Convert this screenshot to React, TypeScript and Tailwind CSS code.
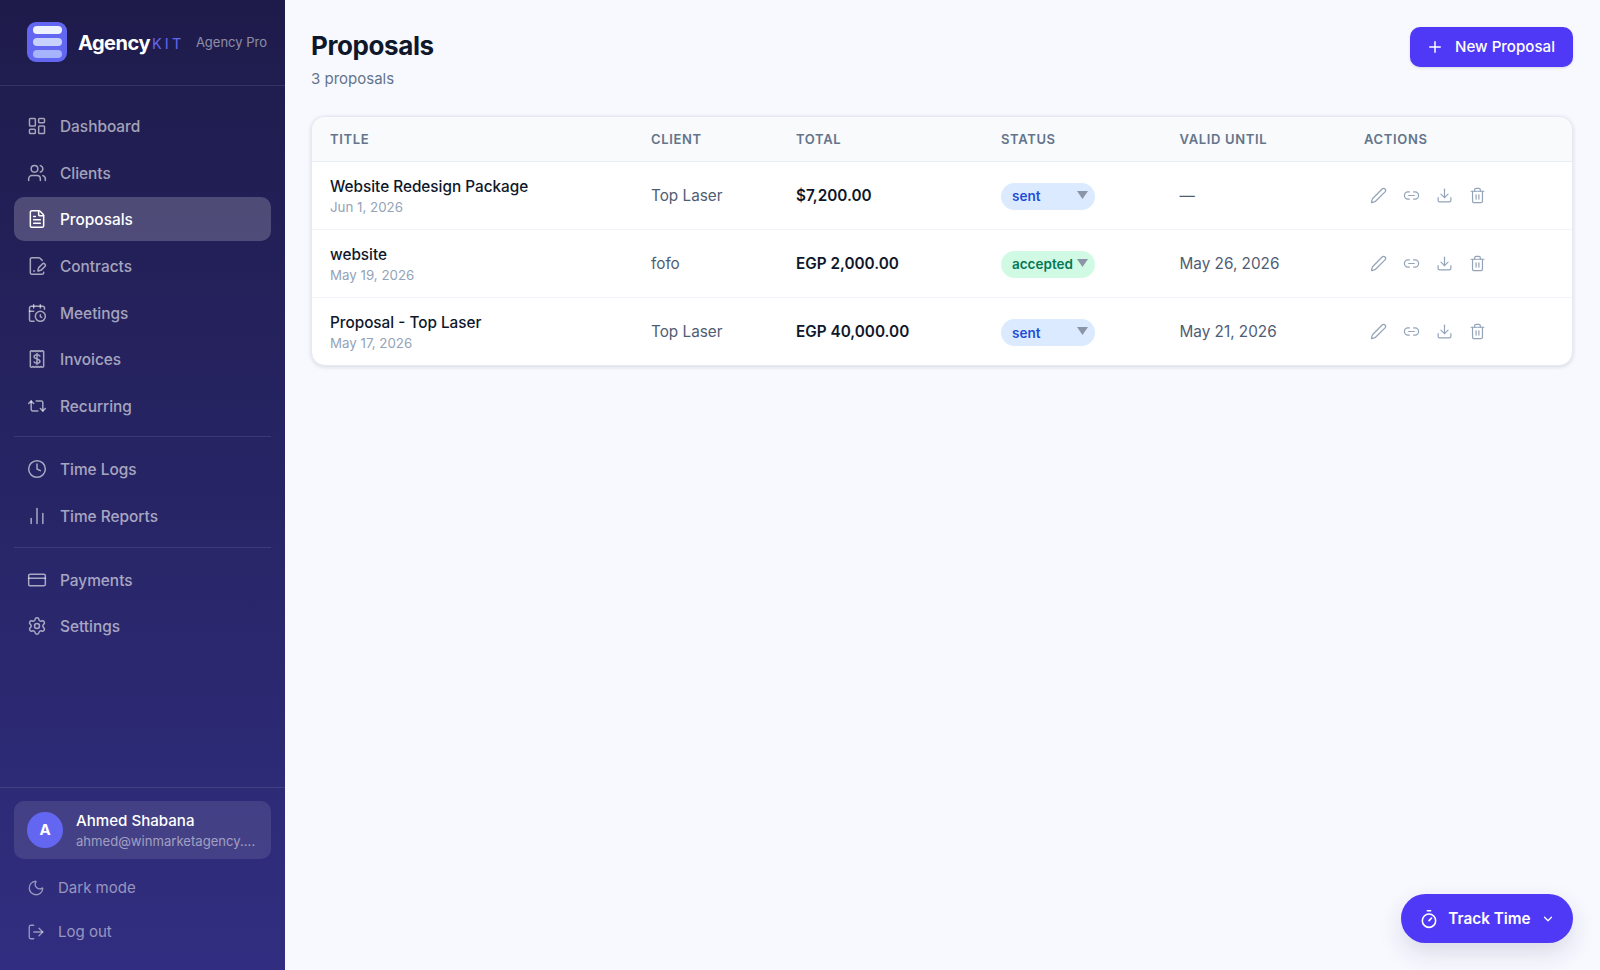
import {
  ChartNoAxesColumn,
  ChevronDown,
  Clock,
  CreditCard,
  Download,
  FileText,
  Link2,
  LayoutDashboard,
  LogOut,
  Moon,
  Pen,
  Plus,
  Repeat2,
  Settings,
  Timer,
  Trash2,
  Users,
  CalendarClock,
  FilePenLine,
} from "lucide-react";

function InvoiceIcon() {
  return (
    <svg width="20" height="20" viewBox="0 0 24 24" fill="none" stroke="currentColor" strokeWidth="1.8" strokeLinecap="round" strokeLinejoin="round">
      <path d="M4 3l1.6-1 1.6 1 1.6-1 1.6 1 1.6-1 1.6 1 1.6-1 1.6 1 1.6-1 1.6 1v18l-1.6 1-1.6-1-1.6 1-1.6-1-1.6 1-1.6-1-1.6 1-1.6-1-1.6 1-1.6-1z" />
      <path d="M15.5 8.5c-.5-1-1.8-1.5-3.5-1.5-2 0-3.5.9-3.5 2.4 0 3.4 7 1.8 7 5.2 0 1.500-1.500 2.400-3.500 2.400-1.700 0-3-.5-3.500-1.500M12 5.500v13" />
    </svg>
  );
}

const groups = [
  [
    { label: "Dashboard", icon: <LayoutDashboard size={20} strokeWidth={1.8} /> },
    { label: "Clients", icon: <Users size={20} strokeWidth={1.8} /> },
    { label: "Proposals", icon: <FileText size={20} strokeWidth={1.8} />, active: true },
    { label: "Contracts", icon: <FilePenLine size={20} strokeWidth={1.8} /> },
    { label: "Meetings", icon: <CalendarClock size={20} strokeWidth={1.8} /> },
    { label: "Invoices", icon: <InvoiceIcon /> },
    { label: "Recurring", icon: <Repeat2 size={20} strokeWidth={1.8} /> },
  ],
  [
    { label: "Time Logs", icon: <Clock size={20} strokeWidth={1.8} /> },
    { label: "Time Reports", icon: <ChartNoAxesColumn size={20} strokeWidth={1.8} /> },
  ],
  [
    { label: "Payments", icon: <CreditCard size={20} strokeWidth={1.8} /> },
    { label: "Settings", icon: <Settings size={20} strokeWidth={1.8} /> },
  ],
];

const proposals = [
  { title: "Website Redesign Package", date: "Jun 1, 2026", client: "Top Laser", total: "$7,200.00", status: "sent", valid: "—" },
  { title: "website", date: "May 19, 2026", client: "fofo", total: "EGP 2,000.00", status: "accepted", valid: "May 26, 2026" },
  { title: "Proposal - Top Laser", date: "May 17, 2026", client: "Top Laser", total: "EGP 40,000.00", status: "sent", valid: "May 21, 2026" },
];

function StatusPill({ status }: { status: string }) {
  const accepted = status === "accepted";
  return (
    <div
      className={
        accepted
          ? "flex h-[27px] w-[94px] items-center justify-between rounded-full bg-[#d1fae5] pl-[11px] pr-[7px] text-[13.500px] font-semibold text-[#047857]"
          : "flex h-[27px] w-[94px] items-center justify-between rounded-full bg-[#dbeafe] pl-[11px] pr-[7px] text-[13.500px] font-semibold text-[#1d4ed8]"
      }
    >
      <span className="pt-px">{status}</span>
      <svg width="11" height="8" viewBox="0 0 11 8" className="-mt-[2px]">
        <path d="M0 0h11L5.500 8z" fill="#8b95a7" />
      </svg>
    </div>
  );
}

export default function App() {
  return (
    <div className="flex h-screen overflow-hidden bg-[#f8f9ff] font-['Inter',sans-serif] text-[#0f172a]">
      <aside className="flex w-[285px] shrink-0 flex-col bg-gradient-to-b from-[#1e1b4b] to-[#312e81]">
        <div className="flex h-[86px] shrink-0 items-center border-b border-white/10 pl-[27px] pr-[18px]">
          <div className="mb-[1px] flex h-10 w-10 flex-col justify-center gap-1 rounded-[9px] bg-[#6366f1] px-[5.500px]">
            <div className="h-2 rounded-full bg-[#eef2ff]" />
            <div className="h-2 rounded-full bg-[#c7d2fe]" />
            <div className="h-2 rounded-full bg-[#a5b4fc]" />
          </div>
          <span className="ml-[11px] text-[20px] font-bold tracking-[-0.5px] text-white">Agency</span>
          <span className="ml-[2px] mt-[3px] text-[14.500px] tracking-[3.200px] text-[#6366f1]">KIT</span>
          <span className="ml-auto mt-[1px] text-[13px] text-white/50">Agency Pro</span>
        </div>

        <nav className="flex flex-1 flex-col px-[14px] pt-[18px]">
          {groups.map((group, i) => (
            <div
              key={i}
              className={i > 0 ? "mt-[8.500px] flex flex-col gap-[2.670px] border-t border-white/10 pt-[10px]" : "flex flex-col gap-[2.670px]"}
            >
              {group.map((item) => (
                <div
                  key={item.label}
                  className={
                    item.active
                      ? "flex h-11 items-center gap-[13px] rounded-[10px] bg-white/20 px-[13px] text-[15.400px] font-medium text-white"
                      : "flex h-11 items-center gap-[13px] rounded-[10px] px-[13px] text-[15.400px] font-medium text-white/60"
                  }
                >
                  {item.icon}
                  <span className="pt-px">{item.label}</span>
                </div>
              ))}
            </div>
          ))}
        </nav>

        <div className="border-t border-white/10 px-[14px] pb-[16px] pt-[13px]">
          <div className="flex h-[58px] items-center gap-[13px] rounded-[10px] bg-white/10 px-[13px]">
            <div className="flex h-9 w-9 shrink-0 items-center justify-center rounded-full bg-[#6366f1] text-[15px] font-bold text-white">
              A
            </div>
            <div className="min-w-0 pt-[2px]">
              <div className="text-[15.100px] font-medium leading-[20px] text-white">Ahmed Shabana</div>
              <div className="whitespace-nowrap text-[13.100px] leading-[20px] text-white/50">ahmed@winmarketagency....</div>
            </div>
          </div>
          <div className="mt-[7px] flex h-[44px] items-center gap-[13px] px-[13px] text-[15px] text-white/50">
            <Moon size={18} strokeWidth={1.8} />
            <span>Dark mode</span>
          </div>
          <div className="flex h-[44px] items-center gap-[13px] px-[13px] text-[15px] text-white/50">
            <LogOut size={18} strokeWidth={1.8} />
            <span>Log out</span>
          </div>
        </div>
      </aside>

      <main className="relative flex-1 pl-[26px] pr-[27px] pt-[27px]">
        <div className="flex items-start justify-between">
          <div>
            <h1 className="text-[26px] font-bold leading-[38px] tracking-[-0.4px] text-[#0f172a]">Proposals</h1>
            <p className="mt-[3px] text-[15px] leading-[22px] text-[#64748b]">3 proposals</p>
          </div>
          <button className="flex h-10 w-[163px] items-center justify-center gap-[11px] rounded-[10px] bg-[#4f39f6] pr-[2px] text-[15.100px] font-medium text-white shadow-sm">
            <Plus size={18} strokeWidth={2} />
            New Proposal
          </button>
        </div>

        <div className="mt-[26px] overflow-hidden rounded-[14px] border border-[#e5e9f2] bg-white shadow-[0_1px_4px_rgba(15,23,42,0.14)]">
          <table className="w-full table-fixed border-collapse text-left">
            <colgroup>
              <col className="w-[321px]" />
              <col className="w-[145px]" />
              <col className="w-[205px]" />
              <col className="w-[178.500px]" />
              <col className="w-[184.500px]" />
              <col />
            </colgroup>
            <thead>
              <tr className="h-[44px] border-b border-[#e8ecf3] bg-[#f8fafc] text-[13px] font-semibold tracking-[0.65px] text-[#64748b]">
                <th className="pl-[18px] pt-[2px] font-semibold">TITLE</th>
                <th className="pl-[18px] pt-[2px] font-semibold">CLIENT</th>
                <th className="pl-[18px] pt-[2px] font-semibold">TOTAL</th>
                <th className="pl-[18px] pt-[2px] font-semibold">STATUS</th>
                <th className="pl-[18px] pt-[2px] font-semibold">VALID UNTIL</th>
                <th className="pl-[18px] pt-[2px] font-semibold">ACTIONS</th>
              </tr>
            </thead>
            <tbody>
              {proposals.map((p) => (
                <tr key={p.title + p.date} className="h-[68px] border-b border-[#f1f4f8] last:border-b-0">
                  <td className="pl-[18px] pt-[3px]">
                    <div className="text-[15.300px] font-medium leading-[20px] text-[#0f172a]">{p.title}</div>
                    <div className="text-[13.300px] leading-[20px] text-[#94a3b8]">{p.date}</div>
                  </td>
                  <td className="pl-[18px] pt-[3px] text-[15.300px] text-[#4f5d73]">{p.client}</td>
                  <td className="pl-[18px] pt-[3px] text-[15.300px] font-semibold text-[#0f172a]">{p.total}</td>
                  <td className="pl-[18px] pt-[2px]">
                    <StatusPill status={p.status} />
                  </td>
                  <td className="pl-[18px] pt-[3px] text-[15.300px] text-[#4f5d73]">{p.valid}</td>
                  <td className="pl-[23.500px]">
                    <div className="flex items-center gap-[16.200px] text-[#94a3b8]">
                      <Pen size={17} strokeWidth={1.7} />
                      <Link2 size={17} strokeWidth={1.7} />
                      <Download size={17} strokeWidth={1.7} />
                      <Trash2 size={17} strokeWidth={1.7} />
                    </div>
                  </td>
                </tr>
              ))}
            </tbody>
          </table>
        </div>

        <button className="absolute bottom-[27px] right-[27px] flex h-[49px] w-[172px] items-center justify-center gap-[9px] rounded-full bg-[#4f39f6] pl-[2px] pt-px text-[15.300px] font-semibold text-white shadow-[0_10px_24px_rgba(30,27,75,0.14)]">
          <Timer size={20} strokeWidth={1.9} />
          Track Time
          <ChevronDown size={14} strokeWidth={2.200} className="ml-[1px] mr-[2px]" />
        </button>
      </main>
    </div>
  );
}
